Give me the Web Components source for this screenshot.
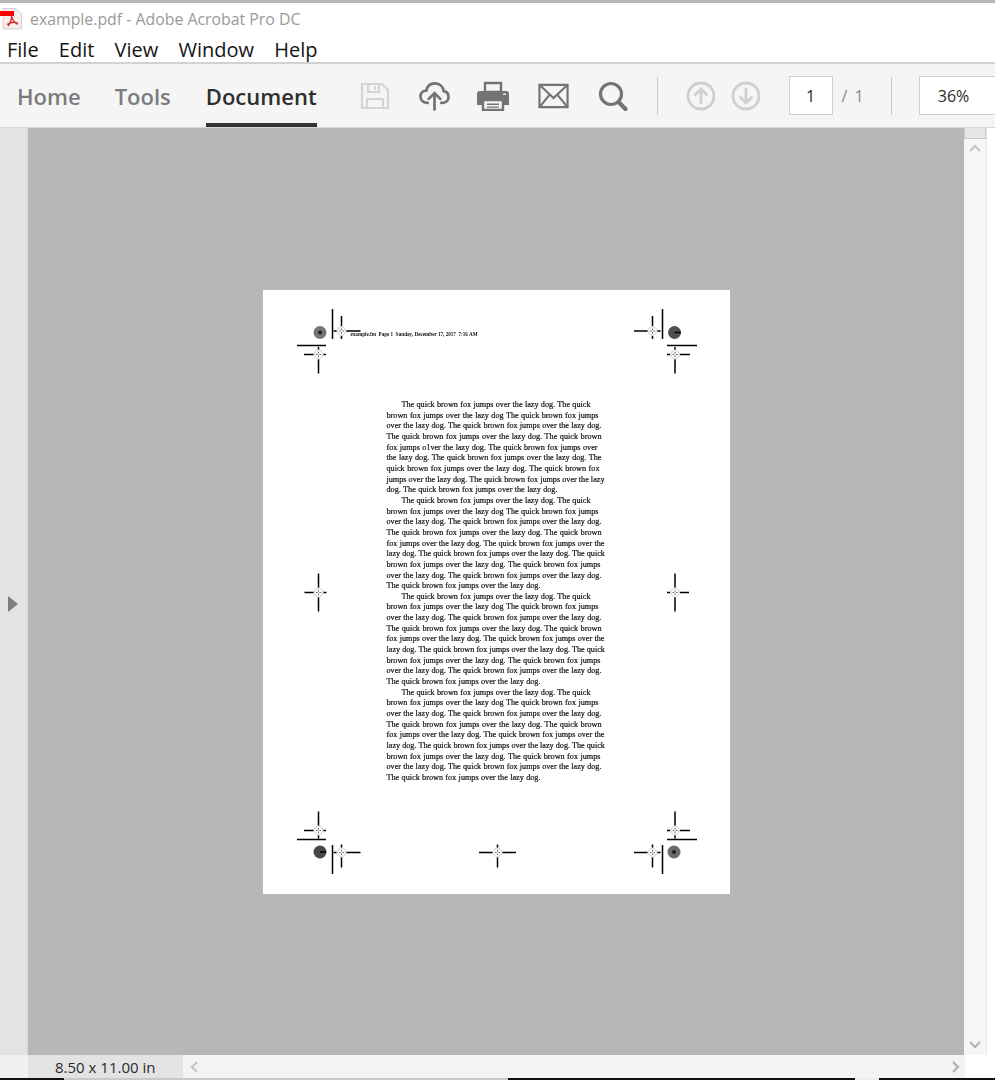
<!DOCTYPE html>
<html><head><meta charset="utf-8"><style>
html,body{margin:0;padding:0;background:#fff}
body{width:995px;height:1080px;overflow:hidden;font-family:"Open Sans","Liberation Sans",sans-serif;display:flex;flex-direction:column}
</style></head><body>
<app-title></app-title>
<app-menu></app-menu>
<app-toolbar></app-toolbar>
<app-main></app-main>
<app-status></app-status>
<script>
function def(name,html){customElements.define(name,class extends HTMLElement{constructor(){super();this.attachShadow({mode:'open'}).innerHTML=html;}});}
def('app-title',`<style>:host{display:flex;align-items:center;height:36px;border-top:3px solid #b9b7b8;box-sizing:border-box;padding-bottom:2px;background:#fff;font:15.85px "Open Sans",sans-serif;color:#9a9a9a}
svg{display:block;margin-right:8px;margin-top:1px}</style>
<svg width="22" height="22" viewBox="0 0 22 22"><path d="M3 0.5H16L21.5 6V21H3Z" fill="#f3eeee" stroke="#d6d0d0"/><path d="M0 3H14V8H0Z" fill="#f00"/><path d="M8 18C11 14 12 11 11.5 8M7 16.5C11 14 15 14 18 15.5M11.5 8C12 11 14 14 17.5 16.5" fill="none" stroke="#e0262a" stroke-width="1.4"/></svg>
<span>example.pdf - Adobe Acrobat Pro DC</span>`);
def('app-menu',`<style>:host{display:flex;height:26px;padding:1px 0 0 7px;gap:20.2px;align-items:center;box-sizing:border-box;background:#fff;font:20px "Open Sans",sans-serif;color:#141414}</style>
<span>File</span><span>Edit</span><span>View</span><span>Window</span><span>Help</span>`);
def('app-toolbar',`<style>:host{display:flex;align-items:center;height:66px;box-sizing:border-box;border-top:2px solid #d2d2d2;border-bottom:1px solid #d6d6d6;background:#f5f5f5;padding-left:17px;font-family:"Open Sans",sans-serif}
.tab{font-size:22px;font-weight:600;color:#7b7b7b;align-self:stretch;display:flex;align-items:center;box-sizing:border-box;padding-top:0}
.tab.on{color:#2e2e2e;border-bottom:4px solid #333;padding-top:4px}
svg{display:block;flex:none}
.sep{width:1px;height:38px;background:#c8c8c8;flex:none}
.box{box-sizing:border-box;height:39px;border:1px solid #cfcfcf;background:#fff;display:flex;align-items:center;justify-content:center;font-size:16px;color:#2a2a2a;flex:none}
.of{font-size:16px;color:#8a8a8a;flex:none;word-spacing:3px}
</style>
<span class="tab" style="margin-right:34px">Home</span><span class="tab" style="margin-right:35px">Tools</span><span class="tab on" style="margin-right:43px">Document</span>
<svg width="30" height="28" viewBox="0 0 30 28" style="margin-right:29px" fill="none" stroke="#d4d4d4" stroke-width="2.2"><path d="M2 2H22L28 8V26H2Z"/><path d="M8 2V10H19V2M15 4V8M7 26V17H23V26"/></svg>
<svg width="31" height="30" viewBox="0 0 32 30" style="margin-right:27px" fill="none" stroke="#737373" stroke-width="2.8" stroke-linecap="round"><path d="M9 22H8C4 22 1.5 19 1.5 15.5C1.5 12 4 9.500 7.500 9.500C8.500 5 12 2 16.500 2C21.500 2 25 5.500 25.500 10C28.500 10.500 30.500 13 30.500 16C30.500 19.500 28 22 24.500 22H23"/><path d="M16 29V12M10 18L16 12L22 18"/></svg>
<svg width="32" height="30" viewBox="0 0 32 30" style="margin-right:29px"><path d="M8 2H24V11H8Z" fill="#f5f5f5" stroke="#737373" stroke-width="2.400"/><path d="M3 10H29Q32 10 32 13V24H27V19H5V24H0V13Q0 10 3 10Z" fill="#737373"/><path d="M6 19H26V29H6Z" fill="#f5f5f5" stroke="#737373" stroke-width="2.400"/><path d="M10 22.500H22V24H10ZM10 25.500H22V26.700H10Z" fill="#737373"/><path d="M26 12.500H29V14H26Z" fill="#eee"/></svg>
<svg width="31" height="26" viewBox="0 0 32 26" style="margin-right:29px" fill="none" stroke="#737373" stroke-width="2.200"><path d="M1.500 1.500H30.500V24.500H1.500Z"/><path d="M2 2L16 15L30 2M2 24L12 11.500M30 24L20 11.500"/></svg>
<svg width="30" height="30" viewBox="0 0 30 30" style="margin-right:29px" fill="none" stroke="#737373"><circle cx="13" cy="13" r="10.500" stroke-width="3.200"/><path d="M20.500 21L27.500 28" stroke-width="4.200" stroke-linecap="round"/></svg>
<span class="sep" style="margin-right:28px"></span>
<svg width="30" height="30" viewBox="0 0 30 30" style="margin-right:15px" fill="none" stroke="#cfcfcf" stroke-width="2.800"><circle cx="15" cy="15" r="13"/><path d="M15 23V8M8.500 14.500L15 8L21.500 14.500"/></svg>
<svg width="30" height="30" viewBox="0 0 30 30" style="margin-right:28px" fill="none" stroke="#cfcfcf" stroke-width="2.800"><circle cx="15" cy="15" r="13"/><path d="M15 7V22M8.500 15.500L15 22L21.500 15.500"/></svg>
<span class="box" style="width:44px;margin-right:9px">1</span><span class="of">/ 1</span>
<span class="sep" style="margin-left:27px;margin-right:27px"></span>
<span class="box" style="flex:1;border-right:none;justify-content:flex-start;padding-left:18px">36%</span>`);
const A=`The quick brown fox jumps over the lazy dog. The quick`;
const P1=[A,`brown fox jumps over the lazy dog The quick brown fox jumps`,`over the lazy dog. The quick brown fox jumps over the lazy dog.`,`The quick brown fox jumps over the lazy dog. The quick brown`,`fox jumps o1ver the lazy dog. The quick brown fox jumps over`,`the lazy dog. The quick brown fox jumps over the lazy dog. The`,`quick brown fox jumps over the lazy dog. The quick brown fox`,`jumps over the lazy dog. The quick brown fox jumps over the lazy`,`dog. The quick brown fox jumps over the lazy dog.`];
const P2=[A,`brown fox jumps over the lazy dog The quick brown fox jumps`,`over the lazy dog. The quick brown fox jumps over the lazy dog.`,`The quick brown fox jumps over the lazy dog. The quick brown`,`fox jumps over the lazy dog. The quick brown fox jumps over the`,`lazy dog. The quick brown fox jumps over the lazy dog. The quick`,`brown fox jumps over the lazy dog. The quick brown fox jumps`,`over the lazy dog. The quick brown fox jumps over the lazy dog.`,`The quick brown fox jumps over the lazy dog.`];
const E1=[591,599,602,602,598,602,600,605,558],E2=[591,599,602,602,605,605,601,602,541];
const para=(p,e)=>p.map((t,i)=>`<div class="l${i?'':' first'}" style="width:${e[i]-387}px">${t}</div>`).join('');
const paras=para(P1,E1)+para(P2,E2)+para(P2,E2)+para(P2,E2);
function mark(x,y,h1,h2,v1,v2){return `<path d="M${x-h1} ${y}H${x+h2}M${x} ${y-v1}V${y+v2}" stroke="#000" stroke-width="1.500"/><circle cx="${x}" cy="${y}" r="5" fill="#e2e2e2"/><circle cx="${x}" cy="${y}" r="3.200" fill="#fff"/><path d="M${x-2.500} ${y}H${x+2.500}M${x} ${y-2.500}V${y+2.500}" stroke="#555" stroke-width=".9"/><circle cx="${x}" cy="${y}" r="1" fill="#fff"/>`;}
const reg=(x,y,c)=>`<circle cx="${x}" cy="${y}" r="6.500" fill="${c}"/>`;
const ln=d=>`<path d="${d}" stroke="#000" stroke-width="1.500" fill="none"/>`;
const W=467,H=604;
const marks=
 mark(78.5,41,8,19,15,8)+mark(55.5,64.5,14.5,7.5,7.5,19)+reg(57,42.5,'#747474')+'<circle cx="57" cy="42.500" r="2" fill="#222"/>'+ln('M69.500 19V49M34 55.500H63')+
 mark(389.5,41,18.5,8,15,8)+mark(412,64.5,8,15,7.5,19)+reg(411.5,42.5,'#505050')+ln('M411.500 42.500H418M399.500 19V49M404 55.500H434')+
 mark(55.5,302.5,14,8,19,19)+mark(412,302.5,8,14,19,19)+
 mark(55.5,540.5,14.5,7.5,19,8)+ln('M34 549.500H63M69.500 555V584')+reg(57,562,'#474747')+ln('M57 562H63')+mark(78.5,562.5,8,19,8,15)+
 mark(234.5,562.5,18.5,18.5,8,15)+
 mark(412,540.5,8,15,19,8)+ln('M404 549.500H434M399.500 555V584')+mark(389.5,562.5,18.5,8,8,15)+reg(411,562,'#6c6c6c')+'<circle cx="411" cy="562" r="2" fill="#222"/>';
def('pdf-page',`<style>:host{display:block;position:relative;width:${W}px;height:${H}px;box-sizing:border-box;background:#fff;padding:0 0 0 124px;overflow:hidden;font-family:"Liberation Serif",serif;color:#111}
svg{position:absolute;left:0;top:0;filter:blur(.3px)}
.hd{position:relative;font-size:5.150px;font-weight:700;white-space:pre;height:110px;padding-top:40.500px;box-sizing:border-box;margin-left:-36px;color:#111;filter:blur(.2px)}
.l{font-size:8.200px;line-height:10.650px;white-space:nowrap;text-align:justify;text-align-last:justify;filter:blur(.3px);-webkit-text-stroke:.2px #111;box-sizing:border-box}.l.first{padding-left:15px}
</style>
<svg width="${W}" height="${H}" viewBox="0 0 ${W} ${H}">${marks}</svg>
<div class="hd">example.fm  Page 1  Sunday, December 17, 2017  7:16 AM</div>${paras}`);
def('app-main',`<style>:host{display:flex;height:927px;flex:none;background:#b7b7b7}
.rail{width:28px;background:#e3e3e3;border-right:1px solid #d8d8d8;box-sizing:border-box;display:flex;align-items:center;flex:none}
.rail svg{margin:24px 0 0 8px}
.view{flex:1;padding-top:162px;display:flex;justify-content:center;box-sizing:border-box}
.sb{width:31px;flex:none;background:#fff;display:flex;flex-direction:column}
.track{flex:1;width:23px;background:#f6f6f6;border-right:1px solid #e6e6e6;box-sizing:border-box;display:flex;flex-direction:column;align-items:center;justify-content:space-between}
.thumb{width:100%;height:11px;background:#e6e6e6;border:1px solid #c8c8c8;border-top:none;box-sizing:border-box}
.track svg{display:block;margin:5px 0 6px}
</style>
<div class="rail"><svg width="11" height="16" viewBox="0 0 11 16"><path d="M0 0L10 8L0 16Z" fill="#7d7d7d"/></svg></div>
<div class="view"><pdf-page></pdf-page></div>
<div class="sb"><div class="track"><div style="width:100%"><div class="thumb"></div><svg width="12" height="8" viewBox="0 0 12 8" style="margin-left:5px"><path d="M1 7L6 2L11 7" fill="none" stroke="#c2c2c2" stroke-width="2.200"/></svg></div><svg width="12" height="8" viewBox="0 0 12 8"><path d="M1 1L6 6L11 1" fill="none" stroke="#b4b4b4" stroke-width="2.200"/></svg></div></div>`);
def('app-status',`<style>:host{display:flex;flex:1;background:#fff;flex-direction:column;font:15px "Open Sans",sans-serif;color:#2a2a2a}
.row{display:flex;height:23px;align-items:center;margin-right:30px;background:#f3f3f3}
.l0{width:28px;background:#f0f0f0;align-self:stretch}
.sz{width:155px;background:#e3e3e3;align-self:stretch;display:flex;align-items:center;padding-left:27px;box-sizing:border-box}
.fill{flex:1}
svg{display:block}
.edge{height:2px;display:flex}.edge i{display:block}
</style>
<div class="row"><div class="l0"></div><div class="sz">8.50 x 11.00 in</div><svg width="9" height="12" viewBox="0 0 9 12" style="margin-left:7px"><path d="M7 1L2 6L7 11" fill="none" stroke="#c4c4c4" stroke-width="2.200"/></svg><span class="fill"></span><svg width="9" height="12" viewBox="0 0 9 12" style="margin-right:5px"><path d="M2 1L7 6L2 11" fill="none" stroke="#b0b0b0" stroke-width="2.200"/></svg></div>
<div class="edge"><i style="width:64px;background:#111"></i><i style="width:444px;background:#c8c8c8"></i><i style="width:347px;background:#111"></i><i style="width:24px;background:#eee"></i><i style="flex:1;background:#111"></i></div>`);
</script>
</body></html>
